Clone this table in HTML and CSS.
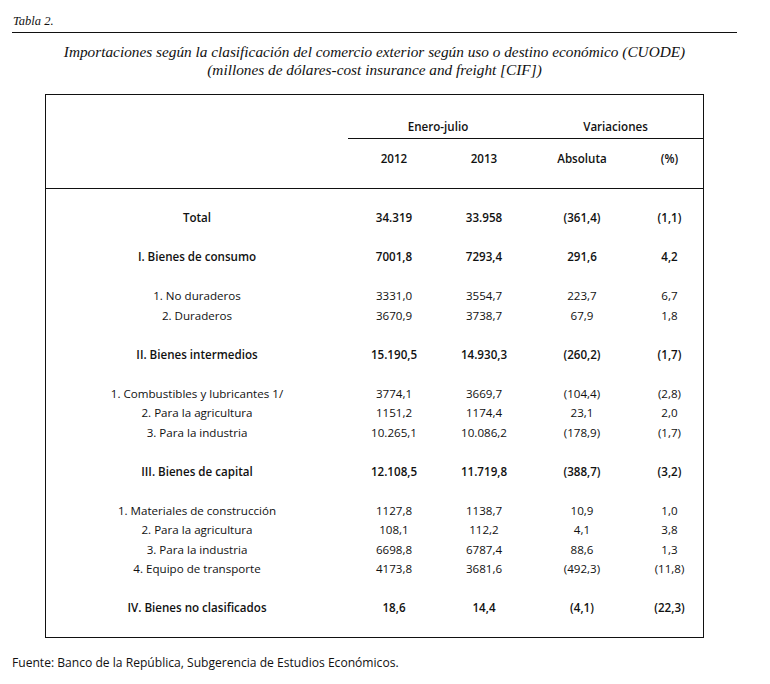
FILE: index.html
```html
<!DOCTYPE html>
<html lang="es">
<head>
<meta charset="utf-8">
<title>Tabla 2</title>
<link rel="stylesheet" href="styles.css">
</head>
<body>
<div class="page">
  <p class="caption">Tabla 2.</p>
  <h1 class="title">Importaciones según la clasificación del comercio exterior según uso o destino económico (CUODE)<br>(millones de dólares-cost insurance and freight [CIF])</h1>
  <div class="table">
    <div class="thead">
      <div class="blank"></div>
      <div class="group">Enero-julio</div>
      <div class="group">Variaciones</div>
      <div class="sub">2012</div>
      <div class="sub">2013</div>
      <div class="sub">Absoluta</div>
      <div class="sub">(%)</div>
    </div>
    <div class="tbody">
      <div class="row bold"><span>Total</span><span>34.319</span><span>33.958</span><span>(361,4)</span><span>(1,1)</span></div>
      <div class="row bold gap"><span>I. Bienes de consumo</span><span>7001,8</span><span>7293,4</span><span>291,6</span><span>4,2</span></div>
      <div class="row gap"><span>1. No duraderos</span><span>3331,0</span><span>3554,7</span><span>223,7</span><span>6,7</span></div>
      <div class="row"><span>2. Duraderos</span><span>3670,9</span><span>3738,7</span><span>67,9</span><span>1,8</span></div>
      <div class="row bold gap"><span>II. Bienes intermedios</span><span>15.190,5</span><span>14.930,3</span><span>(260,2)</span><span>(1,7)</span></div>
      <div class="row gap"><span>1. Combustibles y lubricantes 1/</span><span>3774,1</span><span>3669,7</span><span>(104,4)</span><span>(2,8)</span></div>
      <div class="row"><span>2. Para la agricultura</span><span>1151,2</span><span>1174,4</span><span>23,1</span><span>2,0</span></div>
      <div class="row"><span>3. Para la industria</span><span>10.265,1</span><span>10.086,2</span><span>(178,9)</span><span>(1,7)</span></div>
      <div class="row bold gap"><span>III. Bienes de capital</span><span>12.108,5</span><span>11.719,8</span><span>(388,7)</span><span>(3,2)</span></div>
      <div class="row gap"><span>1. Materiales de construcción</span><span>1127,8</span><span>1138,7</span><span>10,9</span><span>1,0</span></div>
      <div class="row"><span>2. Para la agricultura</span><span>108,1</span><span>112,2</span><span>4,1</span><span>3,8</span></div>
      <div class="row"><span>3. Para la industria</span><span>6698,8</span><span>6787,4</span><span>88,6</span><span>1,3</span></div>
      <div class="row"><span>4. Equipo de transporte</span><span>4173,8</span><span>3681,6</span><span>(492,3)</span><span>(11,8)</span></div>
      <div class="row bold gap"><span>IV. Bienes no clasificados</span><span>18,6</span><span>14,4</span><span>(4,1)</span><span>(22,3)</span></div>
    </div>
  </div>
  <p class="source">Fuente: Banco de la República, Subgerencia de Estudios Económicos.</p>
</div>
</body>
</html>
```

FILE: styles.css
```css
html, body {
  margin: 0;
  padding: 0;
  background: #fff;
}

.page {
  width: 725px;
  margin-left: 12px;
  color: #111;
}

.caption {
  margin: 0;
  padding: 13px 0 3px 1px;
  line-height: 16px;
  font-family: "Liberation Serif", serif;
  font-style: italic;
  font-size: 12.5px;
  color: #111;
  border-bottom: 1px solid #111;
}

.title {
  margin: 10px 0 0;
  text-align: center;
  font-family: "Liberation Serif", serif;
  font-style: italic;
  font-weight: normal;
  font-size: 15.3px;
  line-height: 18px;
  color: #111;
}

.table {
  width: 657px;
  margin: 15px auto 0;
  border: 1px solid #111;
  font-family: "Open Sans", sans-serif;
  font-size: 11.6px;
}

.thead {
  display: grid;
  grid-template-columns: 302px 92px 88px 108px 67px;
  grid-template-rows: 44px 49px;
  border-bottom: 1px solid #111;
  font-weight: 600;
}

.blank {
  grid-row: 1 / span 2;
}

.group {
  grid-column: span 2;
  display: flex;
  align-items: flex-end;
  justify-content: center;
  padding-bottom: 2px;
  line-height: 19.5px;
  border-bottom: 1px solid #111;
  box-sizing: border-box;
}

.sub {
  text-align: center;
  padding-top: 10px;
  line-height: 19.5px;
}

.tbody {
  padding: 19px 0 19px;
}

.row {
  display: grid;
  grid-template-columns: 302px 92px 88px 108px 67px;
  line-height: 19.5px;
  text-align: center;
  white-space: nowrap;
}

.row.gap {
  margin-top: 19.5px;
}

.row.bold {
  font-weight: 600;
}

.source {
  margin: 17px 0 0;
  font-family: "Open Sans", sans-serif;
  font-size: 12.1px;
  line-height: 16px;
}
```
